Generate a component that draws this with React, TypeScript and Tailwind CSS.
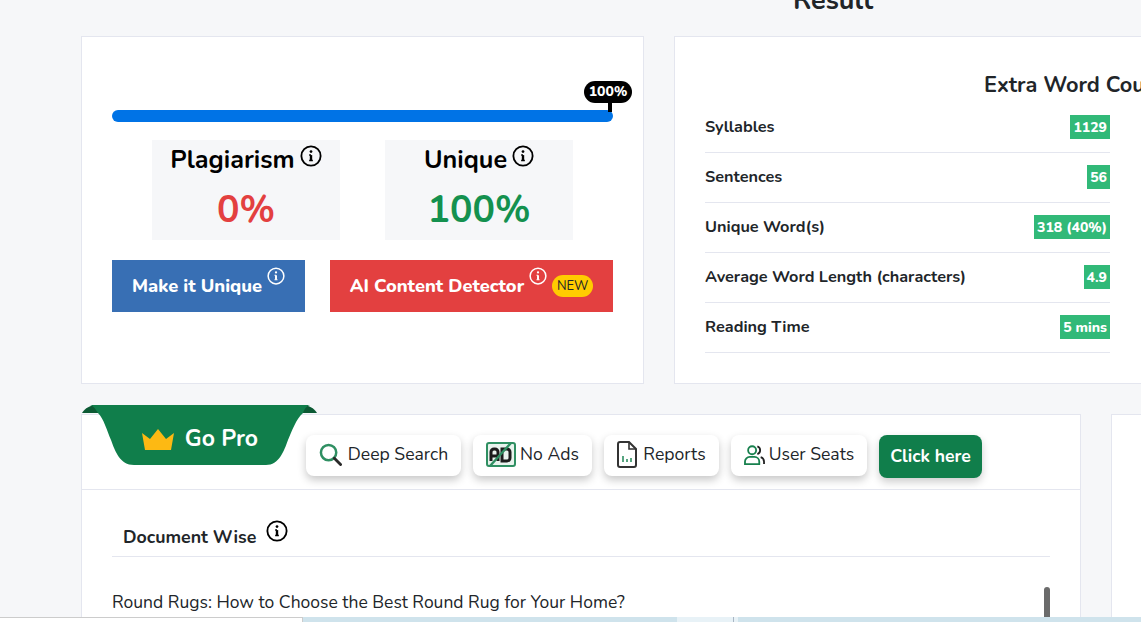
import React from "react";

type InfoProps = {
  className: string;
};

function Info({ className }: InfoProps) {
  return (
    <svg viewBox="0 0 24 24" fill="none" stroke="currentColor" strokeWidth="2" className={className}>
      <circle cx="12" cy="12" r="10.5" />
      <path d="M12 11v6" strokeWidth="2.6" />
      <path d="M10 11h2M10 17h4" strokeWidth="1.6" />
      <circle cx="12" cy="7.2" r="1.5" fill="currentColor" stroke="none" />
    </svg>
  );
}

function Crown() {
  return (
    <svg viewBox="0 0 32 21" className="w-8 h-[21px]">
      <path d="M0 4l8 6 8-10 8 10 8-6-3 17H3z" fill="#fdb913" />
    </svg>
  );
}

function SearchIcon() {
  return (
    <svg viewBox="0 0 24 24" fill="none" className="w-[23px] h-[23px]">
      <circle cx="10" cy="10" r="8" stroke="#2f8f62" strokeWidth="2.6" />
      <path d="M16 16l6.5 6.5" stroke="#2a2a2a" strokeWidth="3" strokeLinecap="round" />
    </svg>
  );
}

function AdIcon() {
  return (
    <svg viewBox="0 0 30 25" fill="none" className="w-[30px] h-[25px]">
      <rect x="1" y="1" width="28" height="23" rx="2" stroke="#2f8f62" strokeWidth="2" fill="#e8f3ed" />
      <path d="M5 19V10a3 3 0 0 1 3-3h1a3 3 0 0 1 3 3v9M5 14h7" stroke="#1c1c1c" strokeWidth="3" />
      <path d="M16 7h5a3 3 0 0 1 3 3v6a3 3 0 0 1-3 3h-5z" stroke="#1c1c1c" strokeWidth="3" />
      <path d="M4 24L25 1" stroke="#2f8f62" strokeWidth="2.4" />
    </svg>
  );
}

function ReportIcon() {
  return (
    <svg viewBox="0 0 20 27" fill="none" className="w-5 h-[27px]">
      <path d="M3 1h9l7 7v16a2 2 0 0 1-2 2H3a2 2 0 0 1-2-2V3a2 2 0 0 1 2-2z" stroke="#333" strokeWidth="2" />
      <path d="M12 1v7h7" stroke="#333" strokeWidth="1.6" />
      <path d="M6 21v-6M10 21v-3M14 21v-4" stroke="#2f8f62" strokeWidth="1.6" />
    </svg>
  );
}

function SeatsIcon() {
  return (
    <svg viewBox="0 0 22 21" fill="none" className="w-[21px] h-5">
      <circle cx="8.5" cy="5.5" r="4.2" stroke="#17804d" strokeWidth="1.9" />
      <path d="M1 20v-2.5a5 5 0 0 1 5-5h5a5 5 0 0 1 5 5V20z" stroke="#17804d" strokeWidth="1.9" />
      <path d="M14 1.5a4.2 4.2 0 0 1 0 8M17.5 12.8a5 5 0 0 1 3.5 4.7V20" stroke="#222" strokeWidth="1.9" />
    </svg>
  );
}

const stats = [
  { label: "Syllables", value: "1129" },
  { label: "Sentences", value: "56" },
  { label: "Unique Word(s)", value: "318 (40%)" },
  { label: "Average Word Length (characters)", value: "4.9" },
  { label: "Reading Time", value: "5 mins" },
];

const perks = [
  { label: "Deep Search", icon: <SearchIcon />, width: "w-[155px]", gap: "gap-[6px]" },
  { label: "No Ads", icon: <AdIcon />, width: "w-[119px]", gap: "gap-1" },
  { label: "Reports", icon: <ReportIcon />, width: "w-[115px]", gap: "gap-[6px]" },
  { label: "User Seats", icon: <SeatsIcon />, width: "w-[136px]", gap: "gap-[4px]" },
];

export default function App() {
  return (
    <div className="relative h-[622px] overflow-hidden bg-[#f6f7f9] font-['Nunito','Noto_Sans',sans-serif] text-[#212529]">
      <div className="w-[1300px] pl-[81px] -mt-[14px]">
        <h2 className="h-[50px] w-[1504px] text-center text-[27px] font-bold leading-[30px] whitespace-nowrap">Result</h2>

        <div className="flex gap-[30px]">
          <div className="relative w-[563px] h-[348px] shrink-0 bg-white border border-[#e4e6ef] px-[30px] pt-[73px]">
            <div className="relative h-3 rounded-md bg-[#0073e6]">
              <div className="absolute right-0 -top-[29px] w-12 h-[22px] rounded-[11px] bg-black text-white text-sm font-extrabold text-center leading-[21px] translate-x-[19px]">100%</div>
              <div className="absolute right-[1px] -top-2 w-1 h-[10px] bg-black"></div>
            </div>

            <div className="flex mt-[18px] pl-10 gap-[45px]">
              <div className="w-[188px] h-[100px] bg-[#f6f7f9] flex flex-col items-center">
                <div className="flex items-start mt-[3px] text-black text-[25.2px] font-bold leading-[34px]">
                  Plagiarism
                  <Info className="w-[22px] h-[22px] ml-[5px] mt-[2px]" />
                </div>
                <div className="mt-[8px] text-[#e34040] text-[37.5px] font-bold leading-[50px]">0%</div>
              </div>
              <div className="w-[188px] h-[100px] bg-[#f6f7f9] flex flex-col items-center">
                <div className="flex items-start mt-[3px] text-black text-[25.2px] font-bold leading-[34px]">
                  Unique
                  <Info className="w-[22px] h-[22px] ml-[5px] mt-[2px]" />
                </div>
                <div className="mt-[8px] text-[#14914f] text-[37.5px] font-bold leading-[50px]">100%</div>
              </div>
            </div>

            <div className="flex justify-between mt-5">
              <div className="w-[193px] h-[52px] bg-[#386fb4] text-white flex items-start justify-center text-[18.3px] font-extrabold">
                <span className="mt-[13px] leading-[26px]">Make it Unique</span>
                <Info className="w-[18px] h-[18px] ml-[5px] mt-[7px]" />
              </div>
              <div className="w-[283px] h-[52px] bg-[#e34040] text-white flex items-start justify-center text-[18.3px] font-extrabold">
                <span className="mt-[13px] leading-[26px]">AI Content Detector</span>
                <Info className="w-[18px] h-[18px] ml-[5px] mt-[7px]" />
                <span className="mt-[15px] ml-[5px] w-[41px] h-[22px] rounded-[11px] bg-[#ffcc00] text-[#212529] text-[13px] font-normal text-center leading-[23px]">NEW</span>
              </div>
            </div>
          </div>

          <div className="w-[560px] h-[348px] shrink-0 bg-white border border-[#e4e6ef] pl-[30px] pt-[33px]">
            <div className="w-[405px]">
              <h3 className="pl-[279px] text-[21.7px] font-bold leading-[30px] whitespace-nowrap">Extra Word Count</h3>
              <div className="mt-[3px]">
                {stats.map((s) => (
                  <div key={s.label} className="h-[50px] flex items-center justify-between border-b border-[#e4e6ef] text-[16.25px] font-bold">
                    <span className="-mt-[1px]">{s.label}</span>
                    <span className="h-6 px-[3px] -mt-[1px] bg-[#31b978] text-white text-sm font-extrabold leading-[25px]">{s.value}</span>
                  </div>
                ))}
              </div>
            </div>
          </div>
        </div>

        <div className="flex gap-[30px] mt-[30px]">
          <div className="relative w-[1000px] h-[230px] shrink-0 bg-white border border-[#e4e6ef]">
            <div className="absolute left-0 -top-[10px] w-[235px] h-[60px] text-white">
              <svg viewBox="0 0 235 60" className="absolute inset-0 w-full h-full">
                <path d="M0 8C3 3 8 0 16 0H219C227 0 232 3 235 8Z" fill="#0c5a34" />
                <path d="M8 0C12 1 14 5 16 8C22 14 25 26 29 35C33 46 38 60 52 60H184C197 60 202 46 206 35C210 26 214 14 221 8C222 5 224 1 228 0Z" fill="#107e4b" />
              </svg>
              <div className="relative h-full flex items-center justify-center gap-[11px] pt-[8px] pl-[1px] text-[23px] font-bold">
                <Crown />
                <span>Go Pro</span>
              </div>
            </div>

            <div className="h-[75px] border-b border-[#e4e6ef] pl-[224px] pt-[20px] flex items-start gap-3">
              {perks.map((p) => (
                <div key={p.label} className={`${p.width} h-[41px] rounded-lg bg-white shadow-[0_4px_9px_rgba(0,0,0,0.22)] flex items-center justify-center text-[17.6px] pb-[2px] ${p.gap}`}>
                  {p.icon}
                  <span>{p.label}</span>
                </div>
              ))}
              <div className="w-[103px] h-[43px] rounded-lg bg-[#107e4b] text-white text-[17.6px] font-bold text-center leading-[43px] shadow-[0_4px_8px_rgba(0,0,0,0.2)]">Click here</div>
            </div>

            <div className="relative px-[30px]">
              <div className="h-[67px] border-b border-[#e4e6ef] flex items-start pl-[11px] text-[17.8px] font-bold">
                <span className="mt-[34px] leading-[26px]">Document Wise</span>
                <Info className="w-[22px] h-[22px] ml-[10px] mt-[30px] text-black" />
              </div>
              <p className="mt-[33px] text-[17.5px] leading-6">Round Rugs: How to Choose the Best Round Rug for Your Home?</p>
              <div className="absolute right-[30px] top-[97px] w-[6px] h-[40px] rounded-[3px] bg-[#6b6b6b]"></div>
            </div>
          </div>
          <div className="w-[200px] h-[230px] shrink-0 bg-white border border-[#e4e6ef]"></div>
        </div>
      </div>

      <div className="absolute left-0 right-0 bottom-0 h-[5px] flex bg-[#cfe3ec]">
        <div className="w-[303px] bg-white border-t border-r border-[#cccccc]"></div>
        <div className="w-[374px]"></div>
        <div className="w-[56px] bg-[#e8f2f7]"></div>
        <div className="w-[1px] bg-[#a9b6c4]"></div>
        <div className="w-1 bg-[#e8f2f7]"></div>
      </div>
    </div>
  );
}
